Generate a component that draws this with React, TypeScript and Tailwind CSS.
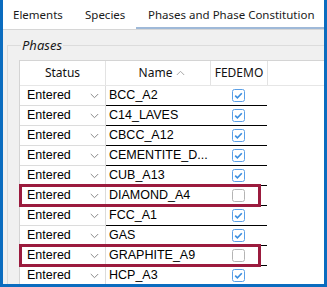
import React from 'react';

const rows = [
  { name: 'BCC_A2', on: true },
  { name: 'C14_LAVES', on: true },
  { name: 'CBCC_A12', on: true },
  { name: 'CEMENTITE_D...', on: true },
  { name: 'CUB_A13', on: true },
  { name: 'DIAMOND_A4', on: false },
  { name: 'FCC_A1', on: true },
  { name: 'GAS', on: true },
  { name: 'GRAPHITE_A9', on: false },
  { name: 'HCP_A3', on: true },
];

const Check: React.FC<{ on: boolean }> = ({ on }) =>
  on ? (
    <svg width="13" height="13" viewBox="0 0 13 13">
      <rect x="0.5" y="0.5" width="12" height="12" rx="2" fill="#fff" stroke="#5a9fe6" />
      <path d="M3.2 6.6 L5.4 8.8 L9.8 4.2" fill="none" stroke="#3a8ddf" strokeWidth="1.6" />
    </svg>
  ) : (
    <svg width="13" height="13" viewBox="0 0 13 13">
      <rect x="0.5" y="0.5" width="12" height="12" rx="2" fill="#fff" stroke="#b4b4b4" />
    </svg>
  );

const Chevron = () => (
  <svg width="9" height="6" viewBox="0 0 9 6">
    <path d="M0.8 1 L4.5 4.7 L8.2 1" fill="none" stroke="#8a8a8a" strokeWidth="1" />
  </svg>
);

export default function App() {
  const ui = { fontFamily: '"Noto Sans", "Open Sans", sans-serif' };
  const cell = { fontFamily: '"Liberation Sans", Arial, sans-serif' };

  return (
    <div className="w-[327px] h-[287px] overflow-hidden bg-[#f0f0f0] border-x-[3px] border-b-[3px] border-[#0b6cbf] flex flex-col">
      {/* tab strip */}
      <div className="h-[30px] shrink-0 bg-white border-b border-[#d6d6d6] flex items-stretch text-[11.5px] text-[#1a1a1a]" style={ui}>
        <div className="pl-[10px] w-[82px] flex items-center">Elements</div>
        <div className="w-[51px] flex items-center">Species</div>
        <div className="flex-1 pl-[12px] flex items-center border-b-[2px] border-[#9fb9d8] mt-[2px]">
          Phases and Phase Constitution
        </div>
      </div>

      {/* group box */}
      <div className="flex-1 pt-[8px] pl-[4px]">
        <fieldset className="h-full border-t border-l border-[#dcdcdc] pl-[11px] pt-[8px]">
          <legend className="ml-[2px] px-[1px] italic text-[13px] text-[#1a1a1a] leading-[14px]" style={ui}>
            Phases
          </legend>

          <div className="bg-white border-t border-l border-[#d4d4d4] h-full">
            {/* header */}
            <div className="flex h-[25px] border-b border-[#e6e6e6] text-[12px] text-[#111]" style={ui}>
              <div className="w-[86px] border-r border-[#e3e3e3] flex items-center justify-center">Status</div>
              <div className="w-[105px] border-r border-[#e3e3e3] flex items-center justify-center gap-[4px]">
                <span className="pl-[8px]">Name</span>
                <svg width="9" height="6" viewBox="0 0 9 6">
                  <path d="M0.8 5 L4.5 1.3 L8.2 5" fill="none" stroke="#a8a8a8" strokeWidth="1" />
                </svg>
              </div>
              <div className="w-[57px] border-r border-[#e3e3e3] flex items-center justify-center">FEDEMO</div>
              <div className="flex-1" />
            </div>

            {/* rows */}
            <div className="relative">
              {rows.map((r) => (
                <div key={r.name} className="flex h-[20px] text-[12.5px] text-black" style={cell}>
                  <div className="w-[86px] flex items-center justify-between pl-[7px] pr-[6px] bg-white border-r border-b border-[#dcdcdc]">
                    <span>Entered</span>
                    <Chevron />
                  </div>
                  <div className="w-[161px] flex border-b border-black">
                    <div className="w-[104px] flex items-center pl-[3px] whitespace-nowrap overflow-hidden">{r.name}</div>
                    <div className="flex-1 flex items-center justify-center pr-[1px]">
                      <Check on={r.on} />
                    </div>
                  </div>
                  <div className="flex-1" />
                </div>
              ))}

              {/* highlight boxes */}
              <div className="absolute left-[-1px] top-[98px] w-[242px] h-[23px] border-[3px] border-[#9b1b3e]" />
              <div className="absolute left-[-1px] top-[158px] w-[242px] h-[23px] border-[3px] border-[#9b1b3e]" />
            </div>
          </div>
        </fieldset>
      </div>
    </div>
  );
}
